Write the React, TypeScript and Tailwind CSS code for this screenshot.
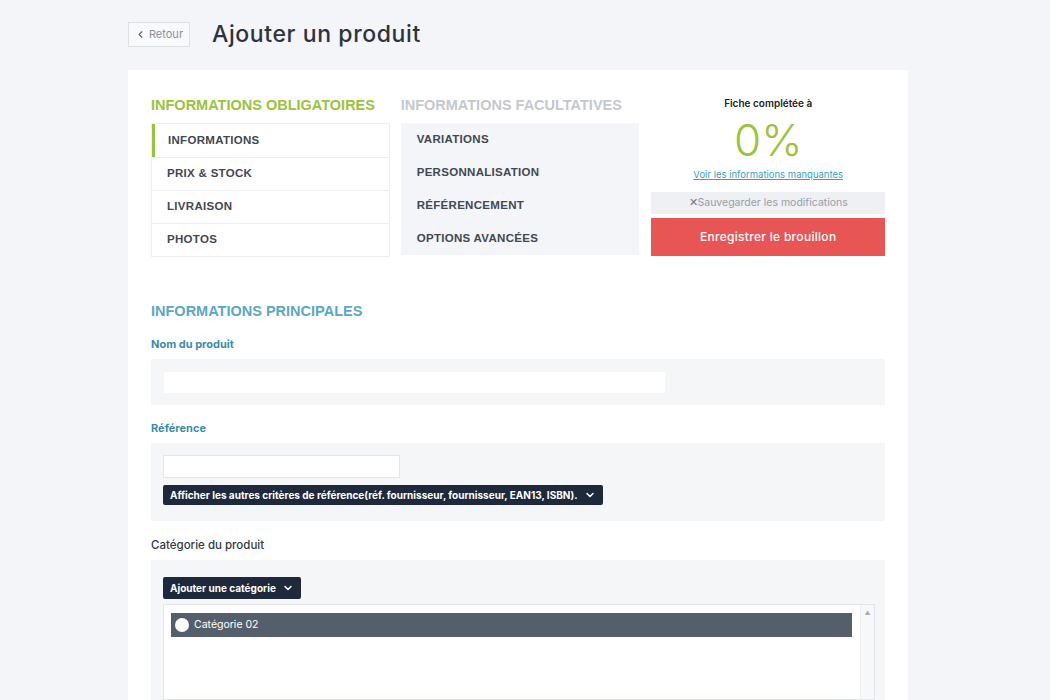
import { ChevronDown, ChevronLeft } from "lucide-react";

const required = ["INFORMATIONS", "PRIX & STOCK", "LIVRAISON", "PHOTOS"];
const optional = ["VARIATIONS", "PERSONNALISATION", "RÉFÉRENCEMENT", "OPTIONS AVANCÉES"];

const sans = "font-['Liberation_Sans',Arial,sans-serif]";
const inter = "font-['Inter','Open_Sans',sans-serif]";

export default function App() {
  return (
    <div className={`min-h-[700px] bg-[#f3f5f9] ${inter}`}>
      <div className="ml-[128px] w-[780px]">
        <header className="flex h-[70px] items-center gap-[22px] pb-[1px]">
          <button className="flex h-[25px] w-[62px] items-center justify-center gap-[3px] border border-[#dde1e6] bg-[#f8f9fb] text-[11px] text-[#8a9099]">
            <ChevronLeft size={11} strokeWidth={2.5} className="text-[#666]" />
            Retour
          </button>
          <h1 className="text-[23px] font-medium tracking-[0.6px] text-[#2b3340]">Ajouter un produit</h1>
        </header>

        <main className="bg-white px-[23px] pt-[26px]">
          <div className="flex gap-[11px]">
            <section className="w-[239px]">
              <h2 className={`${sans} mb-[9px] text-[14.5px] font-bold leading-[18px] text-[#9cc33b]`}>INFORMATIONS OBLIGATOIRES</h2>
              <ul className="border border-[#eceef1]">
                {required.map((item, i) => (
                  <li
                    key={item}
                    className={`${sans} flex h-[33px] items-center text-[11.5px] font-bold tracking-[0.3px] text-[#414852] ${
                      i === 0 ? "border-l-[3px] border-l-[#9cc33b] pl-[13px]" : "border-t border-[#eceef1] pl-[15px]"
                    }`}
                  >
                    {item}
                  </li>
                ))}
              </ul>
            </section>

            <section className="w-[239px]">
              <h2 className={`${sans} mb-[9px] text-[14.5px] font-bold leading-[18px] text-[#c5c8cc]`}>INFORMATIONS FACULTATIVES</h2>
              <ul className="bg-[#f3f5f8]">
                {optional.map((item) => (
                  <li key={item} className={`${sans} flex h-[33px] items-center pl-[16px] text-[11.5px] font-bold tracking-[0.3px] text-[#414852]`}>
                    {item}
                  </li>
                ))}
              </ul>
            </section>

            <section className="ml-[1px] flex w-[234px] flex-col items-center">
              <p className="text-[10px] font-semibold leading-[15px] text-[#222]">Fiche complétée à</p>
              <p className="mt-[4px] text-[44px] font-light leading-[50px] text-[#9cc33b]">0%</p>
              <a className="mt-[3px] text-[9.5px] leading-[14px] text-[#3aa0c8] underline">Voir les informations manquantes</a>
              <button className="mt-[10px] flex h-[22px] w-full items-center justify-center bg-[#eef0f3] text-[10.5px] text-[#9a9ea4]">
                <span className="text-[#777]">✕</span>Sauvegarder les modifications
              </button>
              <button className="mt-[4px] h-[38px] w-full bg-[#e85555] text-[12px] font-medium tracking-[0.3px] text-white">
                Enregistrer le brouillon
              </button>
            </section>
          </div>

          <h2 className={`${sans} mt-[45px] text-[14.5px] font-bold leading-[18px] text-[#5aa8c6]`}>INFORMATIONS PRINCIPALES</h2>

          <label className="mt-[16px] block text-[11px] font-bold leading-[16px] text-[#3d8cab]">Nom du produit</label>
          <div className="mt-[7px] bg-[#f4f6f8] px-[13px] pb-[12px] pt-[13px]">
            <div className="h-[21px] w-[501px] bg-white" />
          </div>

          <label className="mt-[15px] block text-[11px] font-bold leading-[16px] text-[#3d8cab]">Référence</label>
          <div className="mt-[7px] h-[78px] bg-[#f4f6f8] px-[12px] pt-[12px]">
            <div className="h-[23px] w-[237px] border border-[#e2e5e9] bg-white" />
            <button className="mt-[7px] flex h-[20px] items-center gap-[6px] rounded-[2px] bg-[#1e2a3b] px-[7px] text-[10px] font-bold text-white">
              Afficher les autres critères de référence(réf. fournisseur, fournisseur, EAN13, ISBN).
              <ChevronDown size={12} strokeWidth={3} />
            </button>
          </div>

          <label className="mt-[16px] block text-[11.5px] font-medium leading-[16px] text-[#333a44]">Catégorie du produit</label>
          <div className="mt-[7px] bg-[#f4f6f8] pl-[12px] pr-[10px] pt-[17px]">
            <button className="flex h-[22px] items-center gap-[6px] rounded-[2px] bg-[#1e2a3b] px-[7px] text-[10px] font-bold text-white">
              Ajouter une catégorie
              <ChevronDown size={12} strokeWidth={3} />
            </button>
            <div className="mt-[5px] flex h-[96px] border border-[#e2e5e9] bg-white">
              <div className="flex-1 pl-[7px] pr-[8px] pt-[8px]">
                <div className="flex h-[24px] items-center gap-[5px] bg-[#555f6b] pl-[4px] text-[10.5px] text-white">
                  <span className="h-[14px] w-[14px] rounded-full bg-white" />
                  Catégorie 02
                </div>
              </div>
              <div className="w-[14px] border-l border-[#eceef1] bg-[#f7f8f9] pt-[3px] text-center text-[6px] text-[#aaa]">▲</div>
            </div>
          </div>
        </main>
      </div>
    </div>
  );
}
